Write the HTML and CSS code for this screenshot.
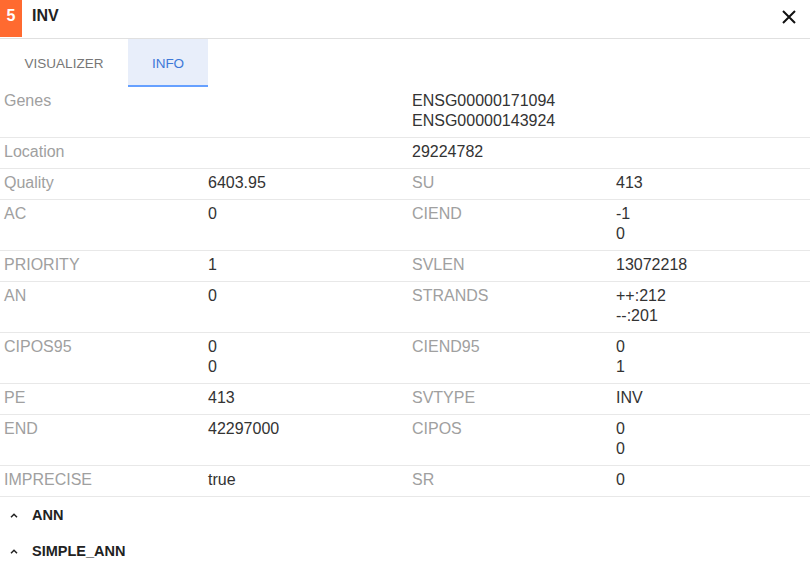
FILE: index.html
```html
<!DOCTYPE html>
<html>
<head>
<meta charset="utf-8">
<link rel="stylesheet" href="styles.css">
</head>
<body>
<div class="panel">
  <header class="head">
    <div class="badge">5</div>
    <div class="title">INV</div>
    <button class="close" aria-label="close">
      <svg width="14" height="14" viewBox="0 0 14 14"><path d="M1 1L13 13M13 1L1 13" stroke="#111" stroke-width="2" fill="none"/></svg>
    </button>
  </header>
  <nav class="tabs">
    <div class="tab">VISUALIZER</div>
    <div class="tab active">INFO</div>
  </nav>
  <div class="grid">
    <div class="row">
      <div class="lab">Genes</div><div class="val"></div>
      <div class="val">ENSG00000171094<br>ENSG00000143924</div><div class="val"></div>
    </div>
    <div class="row">
      <div class="lab">Location</div><div class="val"></div>
      <div class="val">29224782</div><div class="val"></div>
    </div>
    <div class="row">
      <div class="lab">Quality</div><div class="val">6403.95</div>
      <div class="lab">SU</div><div class="val">413</div>
    </div>
    <div class="row">
      <div class="lab">AC</div><div class="val">0</div>
      <div class="lab">CIEND</div><div class="val">-1<br>0</div>
    </div>
    <div class="row">
      <div class="lab">PRIORITY</div><div class="val">1</div>
      <div class="lab">SVLEN</div><div class="val">13072218</div>
    </div>
    <div class="row">
      <div class="lab">AN</div><div class="val">0</div>
      <div class="lab">STRANDS</div><div class="val">++:212<br>--:201</div>
    </div>
    <div class="row">
      <div class="lab">CIPOS95</div><div class="val">0<br>0</div>
      <div class="lab">CIEND95</div><div class="val">0<br>1</div>
    </div>
    <div class="row">
      <div class="lab">PE</div><div class="val">413</div>
      <div class="lab">SVTYPE</div><div class="val">INV</div>
    </div>
    <div class="row">
      <div class="lab">END</div><div class="val">42297000</div>
      <div class="lab">CIPOS</div><div class="val">0<br>0</div>
    </div>
    <div class="row">
      <div class="lab">IMPRECISE</div><div class="val">true</div>
      <div class="lab">SR</div><div class="val">0</div>
    </div>
  </div>
  <div class="section">
    <svg class="caret" width="8" height="5" viewBox="0 0 8 5"><path d="M1 4.2L4 1.3L7 4.2" stroke="#222" stroke-width="1.5" fill="none"/></svg>
    <span>ANN</span>
  </div>
  <div class="section">
    <svg class="caret" width="8" height="5" viewBox="0 0 8 5"><path d="M1 4.2L4 1.3L7 4.2" stroke="#222" stroke-width="1.5" fill="none"/></svg>
    <span>SIMPLE_ANN</span>
  </div>
</div>
</body>
</html>
```

FILE: styles.css
```css
* { box-sizing: border-box; }
html, body {
  margin: 0;
  padding: 0;
  background: #fff;
  overflow: hidden;
}
body {
  font-family: "Liberation Sans", Arial, sans-serif;
  width: 810px;
  height: 567px;
}
.panel { width: 810px; }
.head {
  height: 39px;
  display: flex;
  align-items: flex-start;
  border-bottom: 1px solid #e0e0e0;
}
.badge {
  width: 22px;
  height: 37px;
  background: #ff6a30;
  color: #fff;
  font-weight: bold;
  font-size: 16px;
  display: flex;
  justify-content: center;
  padding-top: 7px;
}
.title {
  margin-left: 10px;
  padding-top: 7px;
  font-weight: bold;
  font-size: 16px;
  color: #222;
}
.close {
  margin-left: auto;
  margin-right: 14px;
  margin-top: 10px;
  border: 0;
  background: none;
  padding: 0;
  width: 14px;
  height: 14px;
  display: flex;
}
.tabs {
  display: flex;
  height: 48px;
}
.tab {
  height: 48px;
  display: flex;
  align-items: center;
  justify-content: center;
  font-size: 13.5px;
  color: #777;
}
.tab:first-child { width: 128px; }
.tab.active {
  width: 80px;
  background: #e8eefa;
  color: #3d78d8;
  border-bottom: 2px solid #66a0ff;
  padding-top: 2px;
}
.grid { width: 816px; }
.row {
  display: grid;
  grid-template-columns: 204px 204px 204px 204px;
  border-bottom: 1px solid #e8e8e8;
  font-size: 16px;
  line-height: 20px;
}
.row > div {
  padding: 4px 4px 6px 4px;
}
.lab { color: #a0a0a0; }
.val { color: #333; }
.section {
  height: 36px;
  display: flex;
  align-items: center;
  font-size: 14.5px;
  font-weight: bold;
  color: #222;
}
.caret {
  margin-left: 10px;
  margin-right: 14px;
}
```
